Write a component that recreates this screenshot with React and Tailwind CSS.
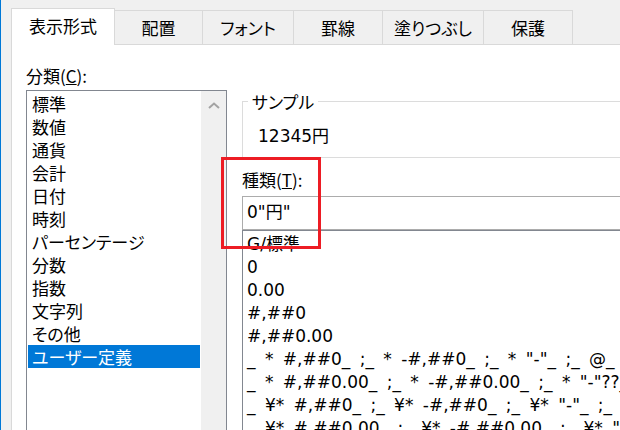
import React from 'react';

const TABS = [
  { label: '表示形式', w: 'w-[104px]', active: true },
  { label: '配置', w: 'w-[88px]' },
  { label: 'フォント', w: 'w-[91px]' },
  { label: '罫線', w: 'w-[89px]' },
  { label: '塗りつぶし', w: 'w-[101px]' },
  { label: '保護', w: 'w-[89px]' },
];

const CATEGORIES = [
  '標準', '数値', '通貨', '会計', '日付', '時刻', 'パーセンテージ',
  '分数', '指数', '文字列', 'その他', 'ユーザー定義',
];

const FORMATS = [
  'G/標準',
  '0',
  '0.00',
  '#,##0',
  '#,##0.00',
  '_ * #,##0_ ;_ * -#,##0_ ;_ * "-"_ ;_ @_ ',
  '_ * #,##0.00_ ;_ * -#,##0.00_ ;_ * "-"??_ ;_ @_ ',
  '_ ¥* #,##0_ ;_ ¥* -#,##0_ ;_ ¥* "-"_ ;_ @_ ',
  '_ ¥* #,##0.00_ ;_ ¥* -#,##0.00_ ;_ ¥* "-"??_ ;_ @_ ',
];

// values use a Verdana-like latin face, the way Meiryo renders them
const VALUE_FONT = "font-['DejaVu_Sans','Noto_Sans_CJK_JP',sans-serif]";

export default function App() {
  const selected = 'ユーザー定義';

  return (
    <div className="relative w-[620px] h-[430px] overflow-hidden bg-[#f0f0f0] border-l border-[#0078d7] pl-[10px] pt-[8px] text-[17px] text-black font-['Noto_Sans_CJK_JP',sans-serif] [font-feature-settings:'palt']">
      {/* Tabs */}
      <div className="flex items-end h-[36px]">
        {TABS.map((t) =>
          t.active ? (
            <div key={t.label}
              className={`${t.w} h-[37px] -mb-px relative z-10 bg-white border border-b-0 border-[#d9d9d9] flex items-center justify-center pb-[2px]`}>
              {t.label}
            </div>
          ) : (
            <div key={t.label}
              className={`${t.w} h-[34px] border-t border-r border-[#d9d9d9] flex items-center justify-center`}>
              {t.label}
            </div>
          )
        )}
      </div>

      {/* Panel */}
      <div className="h-[400px] bg-white border-t border-l border-[#d9d9d9] flex items-start">
        {/* Category column */}
        <div className="ml-[14px] w-[201px] shrink-0">
          <div className="mt-[19px] leading-[23px]">
            分類(<span className="underline">C</span>):
          </div>
          <div className="mt-[3px] h-[360px] border border-[#828790] flex">
            <div className="w-[174px] p-[1px]">
              {CATEGORIES.map((c) => (
                <div key={c}
                  className={`h-[23px] leading-[23px] pl-[4px] whitespace-nowrap ${c === selected ? 'bg-[#0078d7] text-white' : ''}`}>
                  {c}
                </div>
              ))}
            </div>
            <div className="w-[25px] bg-[#f0f0f0] flex justify-center pt-[11px]">
              <svg width="12" height="7" viewBox="0 0 12 7">
                <path d="M1 6 L6 1.5 L11 6" fill="none" stroke="#a3a3a3" strokeWidth="2" />
              </svg>
            </div>
          </div>
        </div>

        {/* Right column */}
        <div className="ml-[15px] w-[420px] shrink-0">
          <div className="relative mt-[56px] h-[57px] border border-[#dcdcdc]">
            <span className="absolute left-[5px] -top-[12px] bg-white px-[4px] leading-[23px]">サンプル</span>
            <div className={`pt-[23px] pl-[15px] leading-[23px] ${VALUE_FONT}`}>12345円</div>
          </div>

          <div className="mt-[10px] leading-[23px]">
            種類(<span className="underline">T</span>):
          </div>
          <div className={`mt-[5px] h-[34px] border border-[#acacac] pl-[4px] flex items-center ${VALUE_FONT}`}>
            0"円"
          </div>
          <div className={`h-[220px] border-l border-t border-[#828790] pt-[2px] pl-[4px] [word-spacing:4px] ${VALUE_FONT}`}>
            {FORMATS.map((f) => (
              <div key={f} className="h-[23px] leading-[23px] whitespace-pre">{f}</div>
            ))}
          </div>
        </div>
      </div>

      {/* Red highlight box */}
      <div className="absolute left-[220px] top-[157px] w-[100px] h-[92px] border-[3px] border-[#ed1c24]" />
    </div>
  );
}
